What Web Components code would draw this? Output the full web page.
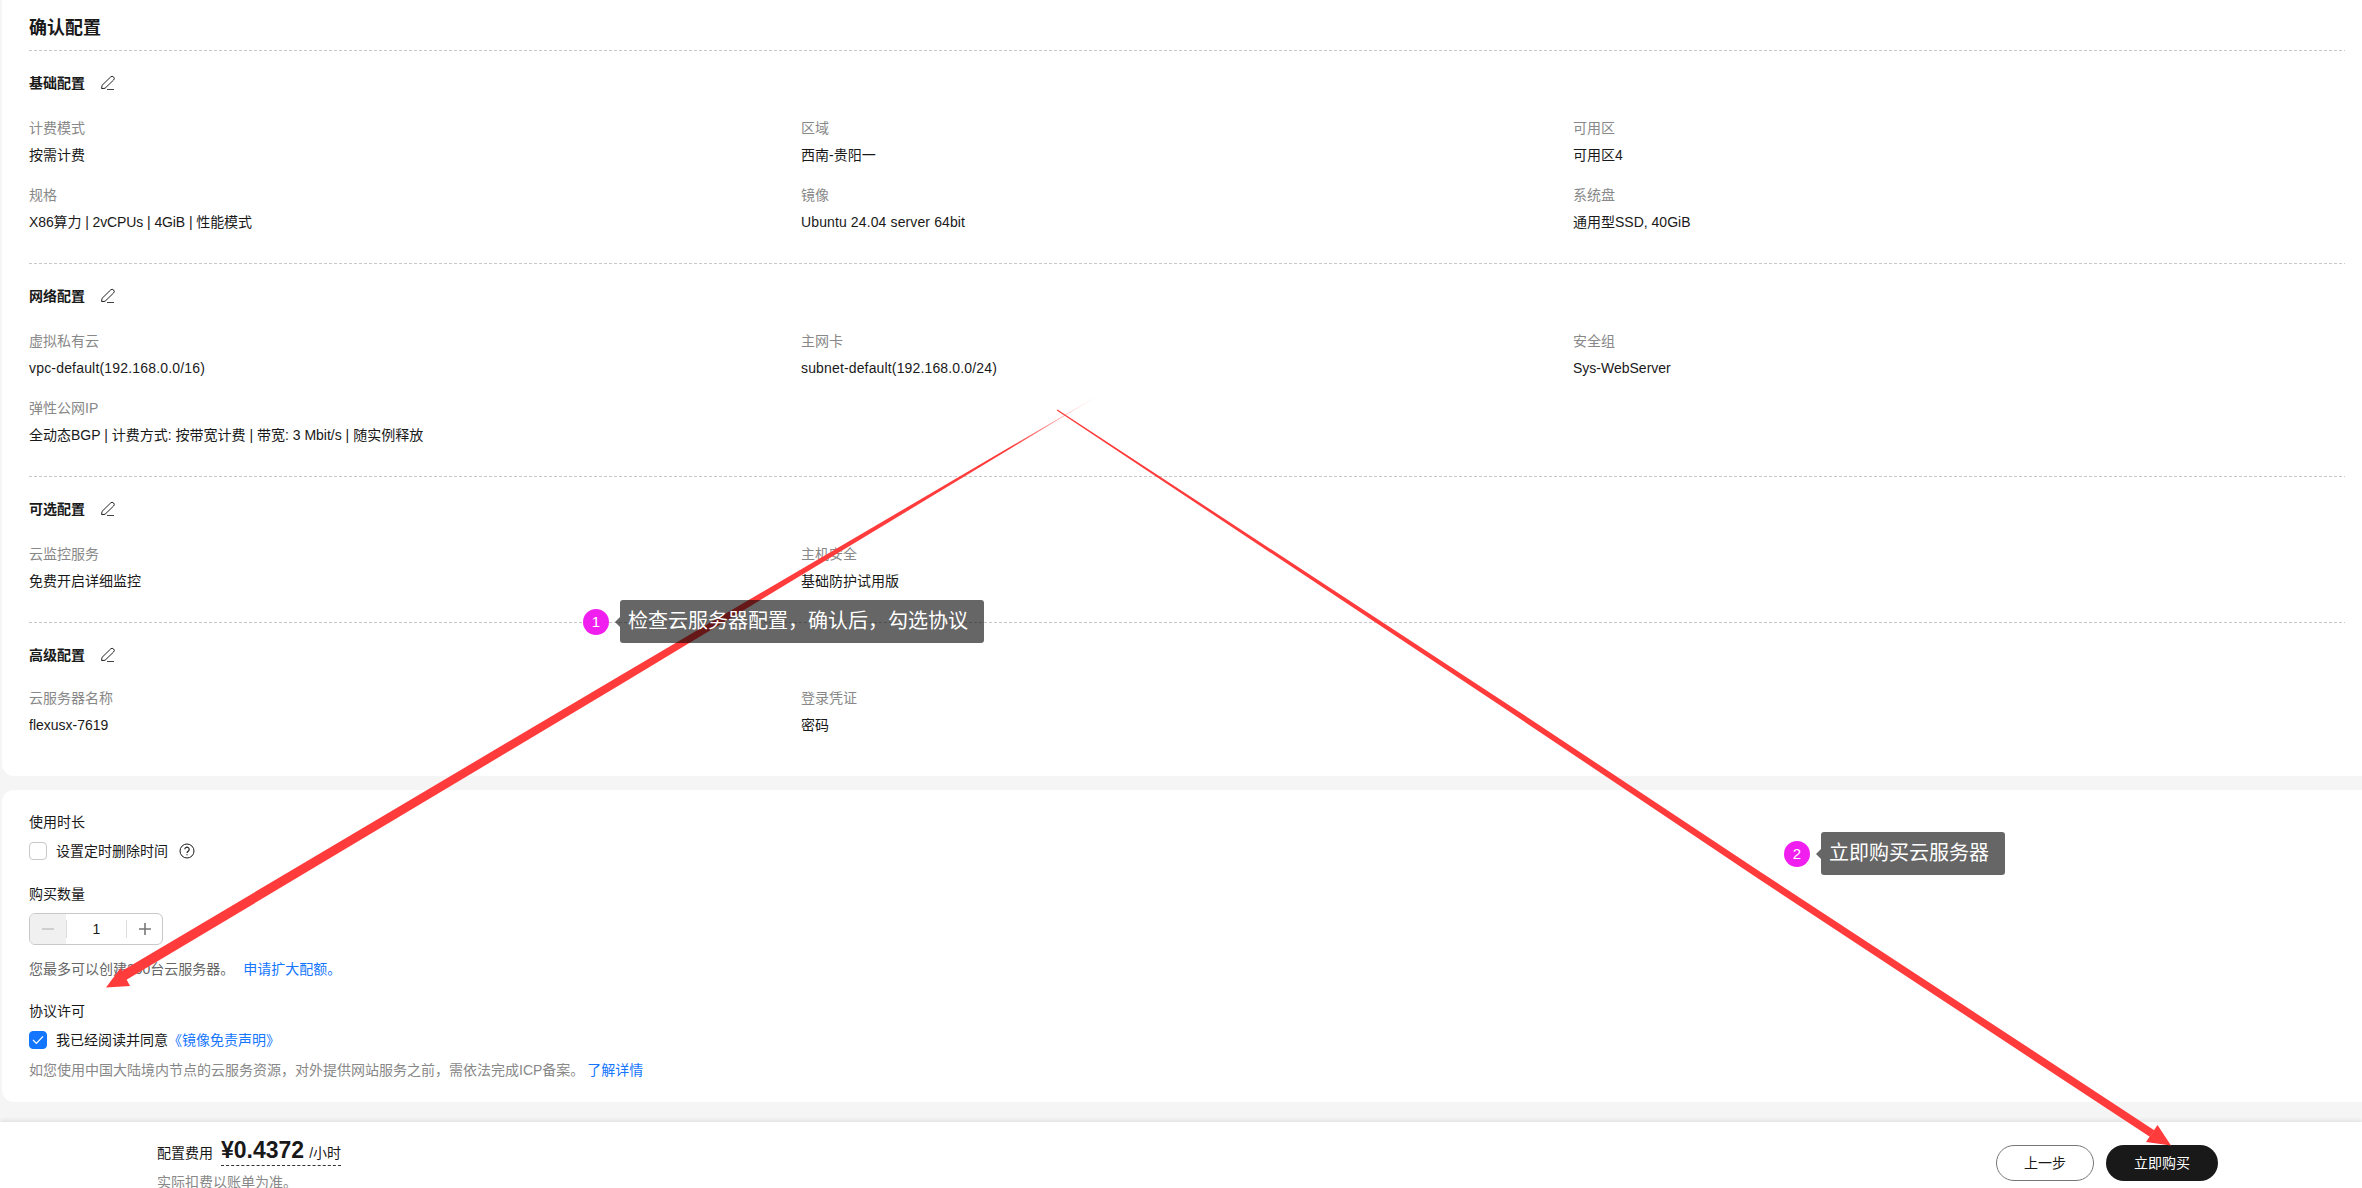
<!DOCTYPE html>
<html lang="zh">
<head>
<meta charset="utf-8">
<title>确认配置</title>
<style>
  html, body {
    margin: 0;
    background: #f5f5f5;
    font-family: "Liberation Sans", "Noto Sans CJK SC", sans-serif;
    font-size: 14px;
    line-height: 20px;
    color: #191919;
  }
  body {
    width: 2362px;
    height: 1188px;
    overflow: hidden;
    position: relative;
  }
</style>
</head>
<body>
<confirm-page></confirm-page>
<script>
const PENCIL = `<svg width="16" height="16" viewBox="0 0 16 16" fill="none" stroke="#222" stroke-width="1"><path d="M1.6 13.6 2 10.4 10.6 2a2.100 2.100 0 0 1 3 3L5 13.300Z"/><path d="M7 14.500h7" stroke="#444"/></svg>`;

customElements.define('cfg-field', class CfgField extends HTMLElement {
  constructor() {
    super();
    this.attachShadow({mode: 'open'});
    this.shadowRoot.innerHTML = `
<style>
  :host { display: flex; flex-direction: column; gap: 7px; }
  .label { color: #888; letter-spacing: 0; }
  .value { color: #191919; }
</style>
<div class="label">${this.getAttribute('label')}</div>
<div class="value"><slot></slot></div>`;
  }
});

customElements.define('cfg-section', class CfgSection extends HTMLElement {
  constructor() {
    super();
    this.attachShadow({mode: 'open'});
    this.shadowRoot.innerHTML = `
<style>
  :host { display: block; padding: 22px 0 31px; background: repeating-linear-gradient(90deg, #c8c8c8 0 3px, transparent 3px 5px) top left / 100% 1px no-repeat; }
  .head { display: flex; align-items: center; gap: 15px; font-weight: 700; height: 20px; margin-top: 1px; }
  .head svg { display: block; margin-top: -1px; }
  .grid { display: grid; grid-template-columns: repeat(3, 1fr); gap: 20px 0; margin-top: var(--grid-top, 25px); }
</style>
<div class="head"><span>${this.getAttribute('heading')}</span>${PENCIL}</div>
<div class="grid"><slot></slot></div>`;
  }
});

customElements.define('cfg-panel', class CfgPanel extends HTMLElement {
  constructor() {
    super();
    this.attachShadow({mode: 'open'});
    this.shadowRoot.innerHTML = `
<style>
  :host { display: block; margin-left: 2px; padding: 0 17px 0 27px; background: #fff; border-radius: 0 0 0 12px; }
  :host([round]) { border-radius: 12px 0 0 12px; }
</style>
<slot></slot>`;
  }
});

customElements.define('cfg-check', class CfgCheck extends HTMLElement {
  constructor() {
    super();
    this.attachShadow({mode: 'open'});
    const on = this.hasAttribute('checked');
    this.shadowRoot.innerHTML = `
<style>
  :host { display: flex; align-items: center; gap: 9px; height: 20px; }
  .box { box-sizing: border-box; width: 18px; height: 18px; border-radius: 4px; border: 1px solid #c8c8c8; background: #fff; display: flex; align-items: center; justify-content: center; }
  .box.on { border-color: #1476ff; background: #1476ff; }
</style>
<div class="box ${on ? 'on' : ''}">${on ? '<svg width="12" height="10" viewBox="0 0 12 10" fill="none" stroke="#fff" stroke-width="1.300"><path d="M1 5l3.400 3.400L11 1.400"/></svg>' : ''}</div>
<div><slot></slot></div>`;
  }
});

customElements.define('cfg-stepper', class CfgStepper extends HTMLElement {
  constructor() {
    super();
    this.attachShadow({mode: 'open'});
    this.shadowRoot.innerHTML = `
<style>
  :host { display: flex; box-sizing: border-box; width: 134px; height: 32px; border: 1px solid #c8c8c8; border-radius: 6px; overflow: hidden; }
  .minus, .plus { display: flex; align-items: center; justify-content: center; flex: none; }
  .minus { width: 36px; background: #f0f0f0; }
  .plus { width: 35px; }
  .val { flex: 1; display: flex; align-items: center; justify-content: center; position: relative; }
  .val::before, .val::after { content: ""; position: absolute; top: 6px; bottom: 6px; width: 1px; background: #ddd; }
  .val::before { left: 0; }
  .val::after { right: 0; }
</style>
<div class="minus"><svg width="14" height="14" viewBox="0 0 14 14"><path d="M1 7h12" stroke="#c4c4c4" stroke-width="1.400"/></svg></div>
<div class="val"><slot></slot></div>
<div class="plus"><svg width="14" height="14" viewBox="0 0 14 14"><path d="M1 7h12M7 1v12" stroke="#777" stroke-width="1.600"/></svg></div>`;
  }
});

customElements.define('price-bar', class PriceBar extends HTMLElement {
  constructor() {
    super();
    this.attachShadow({mode: 'open'});
    this.shadowRoot.innerHTML = `
<style>
  :host { display: flex; box-sizing: border-box; height: 66px; overflow: hidden; justify-content: space-between; background: #fff; padding: 0 144px 0 157px; box-shadow: 0 -2px 4px rgba(0,0,0,.08); position: relative; }
  .left { padding-top: 16px; display: flex; flex-direction: column; gap: 11px; }
  .row { display: flex; align-items: flex-end; gap: 8px; }
  .row > span:first-child { margin-bottom: 3px; }
  .cost { display: flex; align-items: baseline; gap: 5px; border-bottom: 1px dashed #333; height: 27px; }
  .num { font-size: 23px; font-weight: 700; line-height: 24px; }
  .hint { color: #888; line-height: 10px; }
  .right { display: flex; gap: 12px; padding-top: 23px; }
  button { box-sizing: border-box; height: 36px; border-radius: 18px; font: inherit; padding: 0; }
  .prev { width: 98px; background: #fff; border: 1px solid #777; color: #191919; }
  .buy { width: 112px; background: #191919; border: 0; color: #fff; }
</style>
<div class="left">
  <div class="row"><span>配置费用</span><span class="cost"><span class="num">¥0.4372</span><span>/小时</span></span></div>
  <div class="hint">实际扣费以账单为准。</div>
</div>
<div class="right"><button class="prev">上一步</button><button class="buy">立即购买</button></div>`;
  }
});

customElements.define('step-callout', class StepCallout extends HTMLElement {
  constructor() {
    super();
    this.attachShadow({mode: 'open'});
    this.shadowRoot.innerHTML = `
<style>
  :host { position: absolute; display: flex; align-items: center; gap: 11px; height: 43px; left: var(--x); top: var(--y); }
  .dot { width: 26px; height: 26px; border-radius: 50%; background: #f01ff0; color: #fff; font-size: 15px; display: flex; align-items: center; justify-content: center; }
  .tip { position: relative; box-sizing: border-box; height: 43px; padding: 0 16px 0 8px; background: rgba(0,0,0,.6); border-radius: 3px; color: #fff; font-size: 20px; line-height: 42px; white-space: nowrap; }
  .tip::before { content: ""; position: absolute; left: -5px; top: 17px; border: 5px solid transparent; border-left: 0; border-right-color: rgba(0,0,0,.6); }
</style>
<div class="dot">${this.getAttribute('step')}</div>
<div class="tip"><slot></slot></div>`;
  }
});

customElements.define('guide-arrows', class GuideArrows extends HTMLElement {
  constructor() {
    super();
    this.attachShadow({mode: 'open'});
    this.shadowRoot.innerHTML = `
<style>
  :host { position: absolute; left: 0; top: 0; width: 2362px; height: 1188px; pointer-events: none; }
  svg { display: block; }
</style>
<svg width="2362" height="1188" viewBox="0 0 2362 1188">
  <defs>
    <linearGradient id="fade" gradientUnits="userSpaceOnUse" x1="1104" y1="392" x2="1010" y2="448">
      <stop offset="0" stop-color="#ff3b3b" stop-opacity="0"/>
      <stop offset="1" stop-color="#ff3b3b"/>
    </linearGradient>
  </defs>
  <path d="M1104 392 758.900 600.900 621.800 683.700 120.200 983.600 115 975 617.800 676.900 755.900 595.700Z" fill="url(#fade)"/>
  <path d="M106 987.500 130 986 120.500 968Z" fill="#ff3b3b"/>
  <path d="M1057.500 409.500 1509.500 705.400 1762 873 2154.200 1130.200 2149.800 1136.800 1758 878.500 1506.300 709.600 1056.800 410.500Z" fill="#ff3b3b"/>
  <path d="M2171 1145.500 2157.500 1125 2146 1142Z" fill="#ff3b3b"/>
</svg>`;
  }
});

customElements.define('confirm-page', class ConfirmPage extends HTMLElement {
  constructor() {
    super();
    this.attachShadow({mode: 'open'});
    this.shadowRoot.innerHTML = `
<style>
  :host { display: block; }
  h2 { margin: 0; font-size: 18px; line-height: 24px; font-weight: 700; padding: 16px 0 10px; }
  .gap { height: 14px; }
  .gap2 { height: 20px; }
  .form { padding: 22px 0; display: flex; flex-direction: column; }
  .help { display: inline-block; vertical-align: -3px; margin-left: 11px; }
  a { color: #1476ff; text-decoration: none; }
  .muted { color: #666; }
  .note { color: #888; }
</style>
<cfg-panel style="padding-bottom:10px">
  <h2>确认配置</h2>
  <cfg-section heading="基础配置">
    <cfg-field label="计费模式">按需计费</cfg-field>
    <cfg-field label="区域">西南-贵阳一</cfg-field>
    <cfg-field label="可用区">可用区4</cfg-field>
    <cfg-field label="规格" style="letter-spacing:-.1px">X86算力 | 2vCPUs | 4GiB | 性能模式</cfg-field>
    <cfg-field label="镜像" style="letter-spacing:.12px">Ubuntu 24.04 server 64bit</cfg-field>
    <cfg-field label="系统盘">通用型SSD, 40GiB</cfg-field>
  </cfg-section>
  <cfg-section heading="网络配置">
    <cfg-field label="虚拟私有云" style="letter-spacing:.18px">vpc-default(192.168.0.0/16)</cfg-field>
    <cfg-field label="主网卡" style="letter-spacing:.15px">subnet-default(192.168.0.0/24)</cfg-field>
    <cfg-field label="安全组">Sys-WebServer</cfg-field>
    <cfg-field label="弹性公网IP">全动态BGP | 计费方式: 按带宽计费 | 带宽: 3 Mbit/s | 随实例释放</cfg-field>
  </cfg-section>
  <cfg-section heading="可选配置">
    <cfg-field label="云监控服务">免费开启详细监控</cfg-field>
    <cfg-field label="主机安全">基础防护试用版</cfg-field>
  </cfg-section>
  <cfg-section heading="高级配置" style="--grid-top:23px">
    <cfg-field label="云服务器名称">flexusx-7619</cfg-field>
    <cfg-field label="登录凭证">密码</cfg-field>
  </cfg-section>
</cfg-panel>
<div class="gap"></div>
<cfg-panel round>
  <div class="form">
    <div>使用时长</div>
    <cfg-check style="margin-top:9px">设置定时删除时间<svg class="help" width="16" height="16" viewBox="0 0 16 16" fill="none" stroke="#191919"><circle cx="8" cy="8" r="7"/><path d="M5.800 6.300a2.200 2.200 0 1 1 3.400 1.900c-.8.500-1.200.9-1.200 1.800M8 11.200v1.100" stroke-width="1.100"/></svg></cfg-check>
    <div style="margin-top:23px">购买数量</div>
    <cfg-stepper style="margin-top:9px">1</cfg-stepper>
    <div class="muted" style="margin-top:14px">您最多可以创建200台云服务器。<a href="#" style="margin-left:9px">申请扩大配额。</a></div>
    <div style="margin-top:22px">协议许可</div>
    <cfg-check checked style="margin-top:9px">我已经阅读并同意<a href="#">《镜像免责声明》</a></cfg-check>
    <div class="note" style="margin-top:10px">如您使用中国大陆境内节点的云服务资源，对外提供网站服务之前，需依法完成ICP备案。<a href="#" style="margin-left:3px">了解详情</a></div>
  </div>
</cfg-panel>
<div class="gap2"></div>
<price-bar></price-bar>
<guide-arrows></guide-arrows>
<step-callout step="1" style="--x:583px;--y:600px">检查云服务器配置，确认后，勾选协议</step-callout>
<step-callout step="2" style="--x:1784px;--y:832px">立即购买云服务器</step-callout>`;
  }
});
</script>
</body>
</html>
